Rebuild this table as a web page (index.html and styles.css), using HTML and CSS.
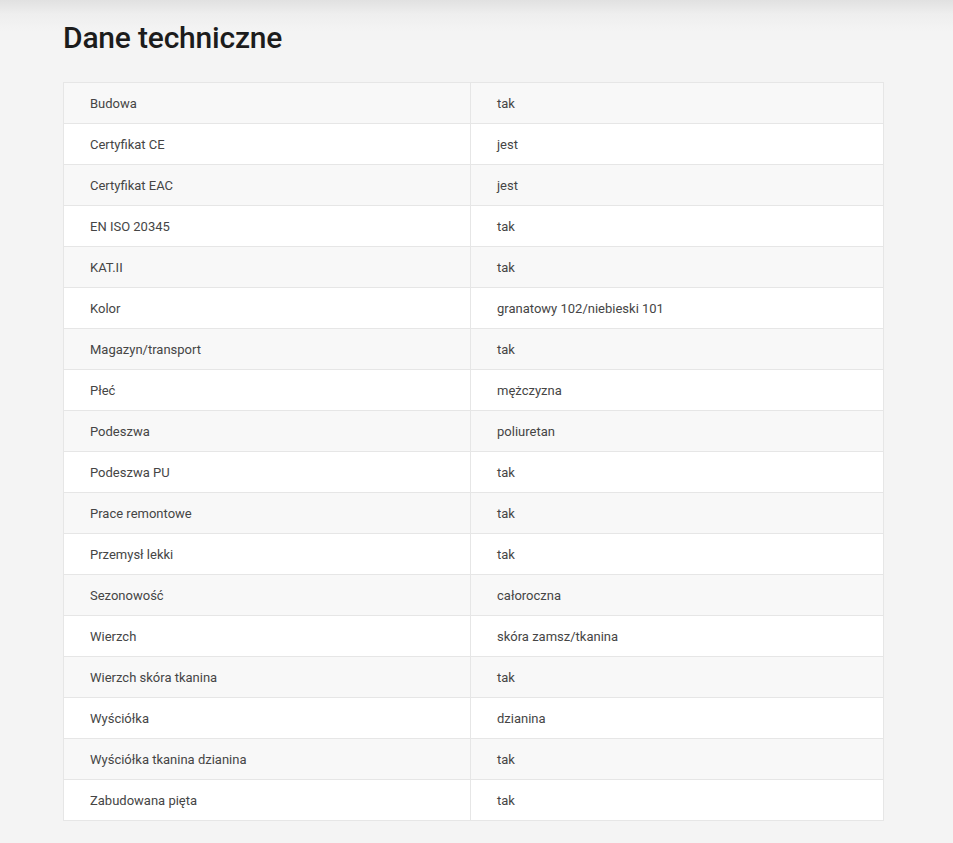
FILE: index.html
```html
<!DOCTYPE html>
<html lang="pl">
<head>
<meta charset="utf-8">
<title>Dane techniczne</title>
<link rel="stylesheet" href="styles.css">
</head>
<body>
<main class="page">
  <h2 class="title">Dane techniczne</h2>
  <table class="specs">
    <tbody>
      <tr><td>Budowa</td><td>tak</td></tr>
      <tr><td>Certyfikat CE</td><td>jest</td></tr>
      <tr><td>Certyfikat EAC</td><td>jest</td></tr>
      <tr><td>EN ISO 20345</td><td>tak</td></tr>
      <tr><td>KAT.II</td><td>tak</td></tr>
      <tr><td>Kolor</td><td>granatowy 102/niebieski 101</td></tr>
      <tr><td>Magazyn/transport</td><td>tak</td></tr>
      <tr><td>Płeć</td><td>mężczyzna</td></tr>
      <tr><td>Podeszwa</td><td>poliuretan</td></tr>
      <tr><td>Podeszwa PU</td><td>tak</td></tr>
      <tr><td>Prace remontowe</td><td>tak</td></tr>
      <tr><td>Przemysł lekki</td><td>tak</td></tr>
      <tr><td>Sezonowość</td><td>całoroczna</td></tr>
      <tr><td>Wierzch</td><td>skóra zamsz/tkanina</td></tr>
      <tr><td>Wierzch skóra tkanina</td><td>tak</td></tr>
      <tr><td>Wyściółka</td><td>dzianina</td></tr>
      <tr><td>Wyściółka tkanina dzianina</td><td>tak</td></tr>
      <tr><td>Zabudowana pięta</td><td>tak</td></tr>
    </tbody>
  </table>
</main>
</body>
</html>
```
FILE: styles.css
```css
html, body {
  margin: 0;
  padding: 0;
}
body {
  background: #f4f4f4 linear-gradient(to bottom, #e1e1e1 0px, #eeeeee 14px, #f4f4f4 32px, #f4f4f4 100%) no-repeat;
  min-height: 843px;
  font-family: Roboto, "Liberation Sans", sans-serif;
  color: #333;
}
.page {
  padding: 18px 0 0 63px;
  width: 821px;
}
.title {
  margin: 0 0 24px 0;
  font-family: Roboto, "Liberation Sans", sans-serif;
  font-size: 30px;
  line-height: 40px;
  font-weight: 500;
  color: #1c1c1c;
  letter-spacing: -0.2px;
}
.specs {
  width: 821px;
  border-collapse: collapse;
  border: 1px solid #e6e6e6;
  table-layout: fixed;
}
.specs td {
  height: 41px;
  padding: 0 26px;
  font-size: 13px;
  color: #454545;
  border-top: 1px solid #e6e6e6;
  box-sizing: border-box;
  vertical-align: middle;
}
.specs td:first-child {
  width: 407px;
  border-right: 1px solid #e6e6e6;
}
.specs tr:nth-child(odd) td {
  background: #f8f8f8;
}
.specs tr:nth-child(even) td {
  background: #ffffff;
}
```
